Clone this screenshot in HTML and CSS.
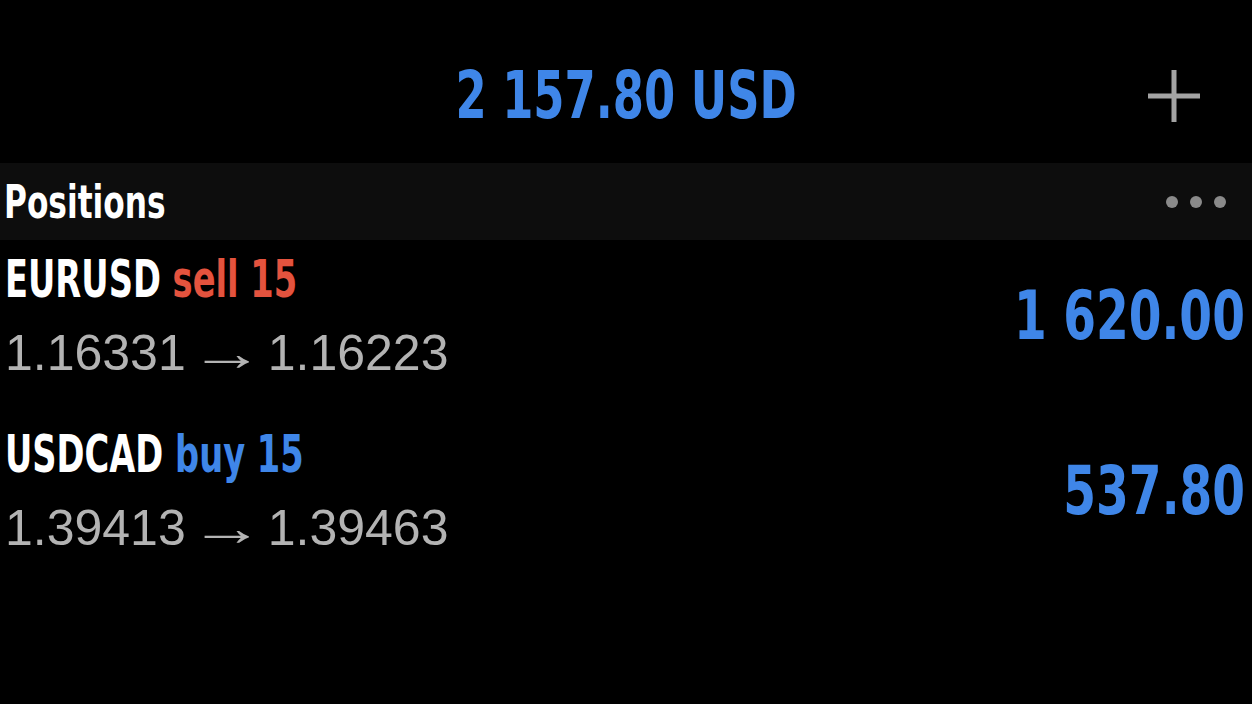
FILE: index.html
```html
<!DOCTYPE html>
<html lang="en">
<head>
  <meta charset="UTF-8">
  <title>Positions</title>
  <link rel="stylesheet" href="styles.css">
</head>
<body>

<header class="top">
  <div></div>
  <div class="balance">2 157.80 USD</div>
  <div class="add-btn">
    <svg width="56" height="56" viewBox="0 0 56 56"><path d="M28 2V54M2 28H54" stroke="#a3a3a3" stroke-width="5"/></svg>
  </div>
</header>

<div class="section">
  <span class="section-title">Positions</span>
  <span class="dots"><i></i><i></i><i></i></span>
</div>

<div class="row">
  <div class="info">
    <div class="pair"><span class="narrow">EURUSD <span class="sell">sell 15</span></span></div>
    <div class="rates">1.16331<span class="arrow">→</span>1.16223</div>
  </div>
  <div class="profit"><span class="narrow">1 620.00</span></div>
</div>

<div class="row">
  <div class="info">
    <div class="pair"><span class="narrow">USDCAD <span class="buy">buy 15</span></span></div>
    <div class="rates">1.39413<span class="arrow">→</span>1.39463</div>
  </div>
  <div class="profit"><span class="narrow">537.80</span></div>
</div>

</body>
</html>
```

FILE: styles.css
```css
body { margin: 0; background: #000; font-family: "DejaVu Sans Condensed", "DejaVu Sans", sans-serif; }
.top { height: 163px; box-sizing: border-box; padding-top: 28px; display: grid; grid-template-columns: 1fr auto 1fr; align-items: center; }
.balance { color: #3f86e8; font-size: 66px; font-weight: bold; transform: scaleX(0.755); }
.add-btn { justify-self: end; margin-right: 50px; display: flex; }
.section { height: 77px; background: #0d0d0d; display: flex; justify-content: space-between; align-items: center; padding: 0 26px 0 4px; }
.section-title { color: #fff; font-size: 46px; font-weight: bold; display: inline-block; transform: scaleX(0.755); transform-origin: left center; }
.dots { display: flex; gap: 12px; }
.dots i { width: 12px; height: 12px; border-radius: 50%; background: #8a8a8a; }
.row { height: 175px; display: flex; justify-content: space-between; align-items: center; padding: 0 7px 0 5px; }
.info { padding-bottom: 24px; }
.narrow { display: inline-block; transform: scaleX(0.72); transform-origin: left center; }
.pair { color: #fff; font-size: 52px; font-weight: bold; line-height: 70px; }
.sell { color: #e4533e; }
.buy { color: #3f86e8; }
.rates { color: #b3b3b3; font-family: "Liberation Sans", "DejaVu Sans", sans-serif; font-size: 50px; line-height: 70px; padding-top: 4px; }
.arrow { display: inline-block; transform: scaleX(1.5); margin: 0 16px; }
.profit { color: #3f86e8; font-size: 68px; font-weight: bold; padding-bottom: 24px; }
.profit .narrow { transform: scaleX(0.77); transform-origin: right center; }
```
